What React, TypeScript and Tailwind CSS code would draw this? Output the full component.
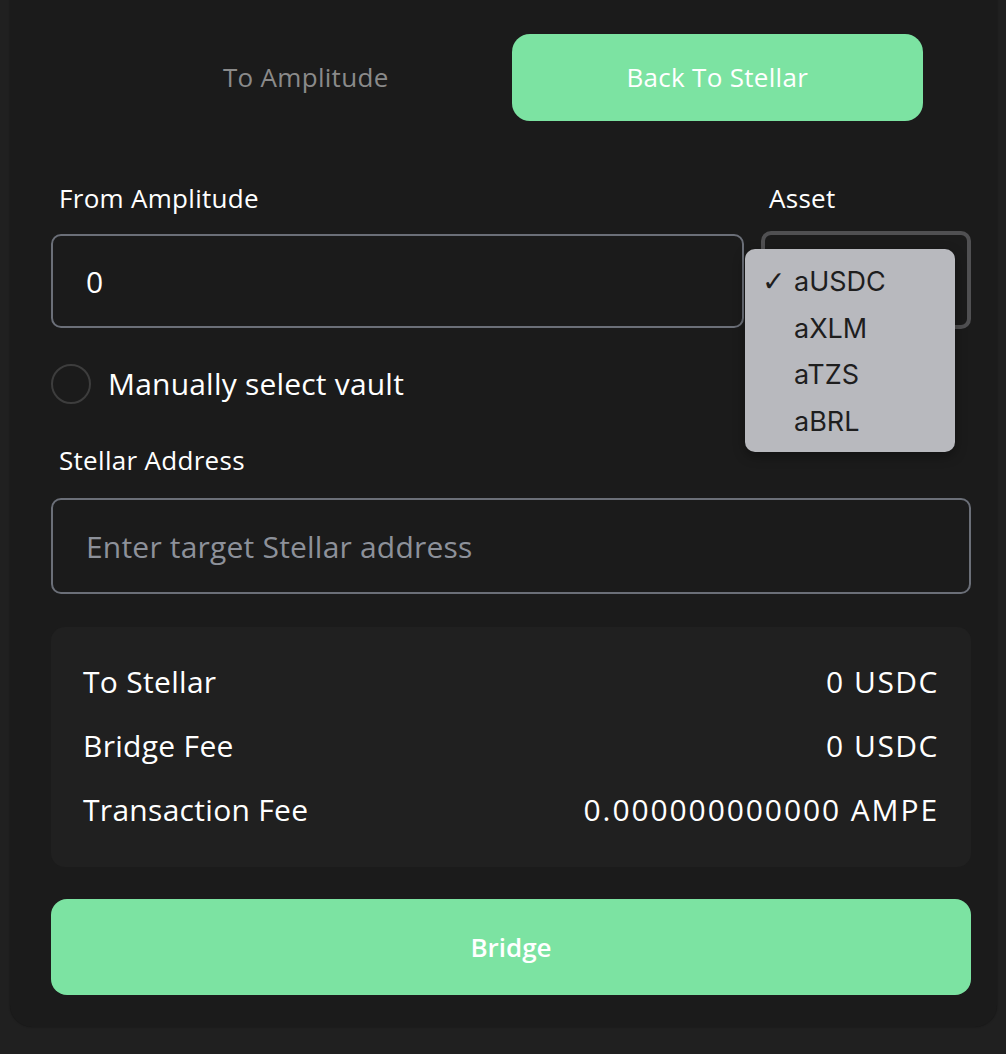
import React from "react";

export default function App() {
  return (
    <div className="min-h-[1054px] w-[1006px] bg-[#202020] overflow-hidden" style={{ fontFamily: "'Open Sans', 'Noto Sans', sans-serif" }}>
      <div className="ml-[10px] mr-[9px] -mt-[20px] h-[1047px] rounded-b-[22px] bg-[#1b1b1b] shadow-[0_0_2px_rgba(0,0,0,0.4)] pl-[41px] pr-[26px] pt-[54px]">
        {/* Tabs */}
        <div className="flex ml-[49px] mr-[48px] h-[87px]">
          <button className="flex-1 flex items-center justify-center text-[26px] text-[#8a8a8a] tracking-[0.3px]">
            To Amplitude
          </button>
          <button className="flex-1 flex items-center justify-center rounded-[18px] bg-[#7ce3a2] text-[26px] text-white tracking-[0.3px]">
            Back To Stellar
          </button>
        </div>

        {/* From + Asset */}
        <div className="flex mt-[60px] gap-[17px]">
          <div className="flex-1">
            <div className="pl-[8px] text-[26px] leading-[34px] text-white tracking-[0.3px]">From Amplitude</div>
            <div className="mt-[19px] h-[94px] rounded-[10px] border-2 border-[#6b6f78] flex items-center pl-[33px] text-[30px] text-white">0</div>
          </div>
          <div className="w-[210px] relative">
            <div className="pl-[8px] text-[26px] leading-[34px] text-white tracking-[0.3px]">Asset</div>
            <div className="mt-[16px] h-[98px] rounded-[10px] border-[4px] border-[#505052] bg-[#1b1b1b]" />
            <div className="absolute left-[-16px] top-[68px] w-[210px] h-[203px] rounded-[10px] bg-[#b8b9be] shadow-[0_4px_12px_rgba(0,0,0,0.35)] pt-[10px] text-[27px] text-[#1e1e1e]" style={{ fontFamily: "Inter, sans-serif" }}>
              {["aUSDC", "aXLM", "aTZS", "aBRL"].map((t, i) => (
                <div key={t} className="flex items-center h-[46.5px]">
                  <span className="w-[49px] pl-[17px] text-[28px] font-bold" style={{ fontFamily: "'DejaVu Sans', sans-serif" }}>{i === 0 ? "✓" : ""}</span>
                  <span>{t}</span>
                </div>
              ))}
            </div>
          </div>
        </div>

        {/* Checkbox */}
        <div className="flex items-center mt-[35px] gap-[17px] h-[40px]">
          <div className="w-[40px] h-[40px] rounded-full border-2 border-[#3d3d3d]" />
          <span className="text-[30px] leading-[40px] text-white tracking-[0.2px]">Manually select vault</span>
        </div>

        {/* Stellar Address */}
        <div className="mt-[39px] pl-[8px] text-[26px] leading-[34px] text-white tracking-[0.3px]">Stellar Address</div>
        <div className="mt-[21px] h-[96px] rounded-[10px] border-2 border-[#6b6f78] flex items-center pl-[33px] text-[30px] text-[#8d919a] tracking-[0.2px]">
          Enter target Stellar address
        </div>

        {/* Summary */}
        <div className="mt-[33px] h-[240px] rounded-[14px] bg-[#202020] px-[32px] pt-[22px] text-[30px] text-white tracking-[0.3px]">
          <div className="flex justify-between h-[64px] items-center"><span>To Stellar</span><span className="tracking-[1.5px]">0 USDC</span></div>
          <div className="flex justify-between h-[64px] items-center"><span>Bridge Fee</span><span className="tracking-[1.5px]">0 USDC</span></div>
          <div className="flex justify-between h-[64px] items-center"><span>Transaction Fee</span><span className="tracking-[1.9px]">0.000000000000 AMPE</span></div>
        </div>

        {/* Bridge */}
        <button className="mt-[32px] w-full h-[96px] rounded-[16px] bg-[#7ce3a2] text-[26px] font-semibold text-white flex items-center justify-center">
          Bridge
        </button>
      </div>
    </div>
  );
}
